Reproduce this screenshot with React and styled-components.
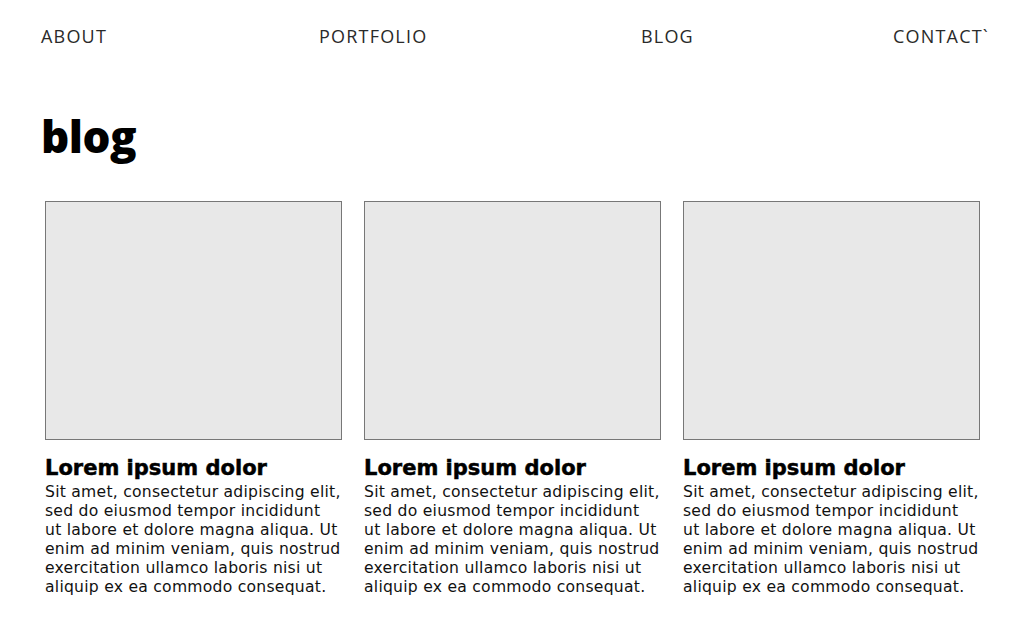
import React from 'react';
import styled, { createGlobalStyle } from 'styled-components';

const GlobalStyle = createGlobalStyle`
  html, body {
    margin: 0;
    padding: 0;
    background: #ffffff;
  }
  body {
    font-family: "Open Sans", "Liberation Sans", sans-serif;
    color: #111;
  }
`;

const Page = styled.div`
  width: 1024px;
  height: 640px;
  overflow: hidden;
  box-sizing: border-box;
`;

const Nav = styled.nav`
  display: grid;
  grid-template-columns: 278px 322px 1fr auto;
  align-items: center;
  height: 72px;
  padding: 0 35px 0 41px;
  box-sizing: border-box;
`;

const NavLink = styled.a`
  font-size: 18px;
  font-weight: 400;
  letter-spacing: 1.2px;
  color: #2a2a2a;
  text-decoration: none;
  cursor: pointer;
  justify-self: start;
`;

const Heading = styled.h1`
  margin: 38px 0 0 41px;
  font-size: 44px;
  font-weight: 800;
  line-height: 52px;
  letter-spacing: -0.5px;
  color: #000;
`;

const Grid = styled.section`
  display: grid;
  grid-template-columns: repeat(3, 297px);
  column-gap: 22px;
  padding: 0 0 0 45px;
  margin-top: 39px;
`;

const Card = styled.article`
  display: flex;
  flex-direction: column;
`;

const Thumb = styled.div`
  height: 239px;
  background: #e8e8e8;
  border: 1px solid #777;
  box-sizing: border-box;
`;

const Title = styled.h2`
  margin: 14px 0 0;
  font-family: "DejaVu Sans", "Open Sans", sans-serif;
  font-size: 21px;
  font-weight: 700;
  line-height: 28px;
  color: #000;
  -webkit-text-stroke: 0.5px #000;
`;

const Body = styled.p`
  margin: 1px 0 0;
  font-family: "DejaVu Sans", "Open Sans", sans-serif;
  font-size: 15.6px;
  line-height: 19px;
  letter-spacing: 0.25px;
  color: #111;
`;

const Line = styled.span`
  display: block;
  white-space: nowrap;
`;

const lines = [
  'Sit amet, consectetur adipiscing elit,',
  'sed do eiusmod tempor incididunt',
  'ut labore et dolore magna aliqua. Ut',
  'enim ad minim veniam, quis nostrud',
  'exercitation ullamco laboris nisi ut',
  'aliquip ex ea commodo consequat.',
];

const posts = [1, 2, 3];

export default function App() {
  return (
    <Page>
      <GlobalStyle />
      <Nav>
        <NavLink>ABOUT</NavLink>
        <NavLink>PORTFOLIO</NavLink>
        <NavLink>BLOG</NavLink>
        <NavLink>CONTACT`</NavLink>
      </Nav>
      <Heading>blog</Heading>
      <Grid>
        {posts.map((p) => (
          <Card key={p}>
            <Thumb />
            <Title>Lorem ipsum dolor</Title>
            <Body>
              {lines.map((l) => (
                <Line key={l}>{l}</Line>
              ))}
            </Body>
          </Card>
        ))}
      </Grid>
    </Page>
  );
}
